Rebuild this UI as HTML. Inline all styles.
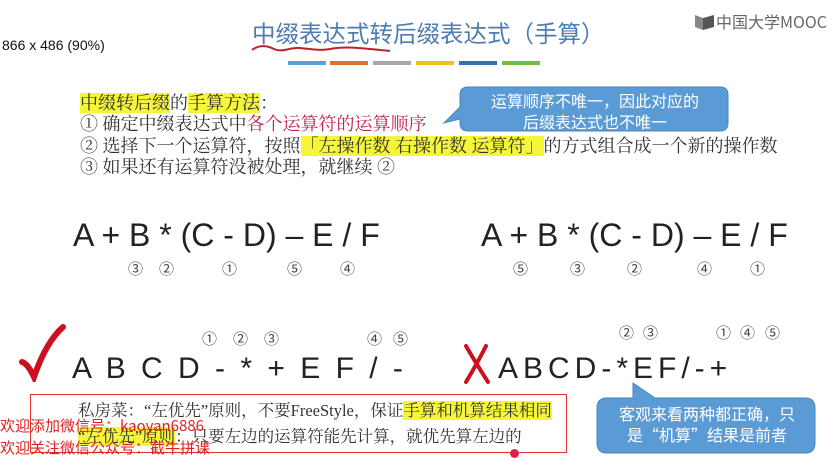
<!DOCTYPE html>
<html><head><meta charset="utf-8"><style>
body{margin:0;width:837px;height:461px;overflow:hidden;background:#fff;position:relative;font-family:"Liberation Sans","Noto Sans CJK SC",sans-serif;}
.a{position:absolute;white-space:nowrap;line-height:1;}
.hl{background:#f5f53a;}
.cn{font-family:"Liberation Serif","Noto Serif CJK SC",serif;color:#333;font-size:18px;}
.n{position:absolute;font-size:15px;color:#444;line-height:1;font-family:"Noto Sans CJK SC",sans-serif;}
.ex{font-size:32px;color:#222;}
</style></head><body>
<div class="a" style="left:2px;top:38px;font-size:14px;color:#111;">866 x 486 (90%)</div>
<div class="a" style="left:252px;top:21px;font-size:23.5px;color:#4f7db0;font-family:'Noto Sans CJK SC',sans-serif;">中缀表达式转后缀表达式（手算）</div>
<svg class="a" style="left:250px;top:44px" width="150" height="12"><path d="M2 6 C10 0,18 2,24 5 C32 9,40 3,50 4 C60 5,70 7,80 5 C95 2,110 4,140 7" stroke="#c0202a" stroke-width="2" fill="none"/></svg>
<div class="a" style="left:288px;top:61px;width:38px;height:4px;background:#5aa0d5"></div>
<div class="a" style="left:330px;top:61px;width:38px;height:4px;background:#e07030"></div>
<div class="a" style="left:373px;top:61px;width:38px;height:4px;background:#a8a8a8"></div>
<div class="a" style="left:416px;top:61px;width:38px;height:4px;background:#f0c020"></div>
<div class="a" style="left:459px;top:61px;width:38px;height:4px;background:#3a6cb8"></div>
<div class="a" style="left:502px;top:61px;width:38px;height:4px;background:#70c040"></div>
<svg class="a" style="left:694px;top:13px" width="22" height="18"><path d="M1 2 L9 5 L9 17 L1 14Z" fill="#888"/><path d="M9 5 L20 2 L20 14 L9 17Z" fill="#555"/></svg>
<div class="a" style="left:716px;top:13px;font-size:16px;color:#666;font-family:'Noto Sans CJK SC',sans-serif;">中国大学MOOC</div>

<div class="a cn" style="left:80px;top:94px;"><span class="hl">中缀转后缀</span>的<span class="hl">手算方法</span>：</div>
<div class="a cn" style="left:80px;top:115px;">① 确定中缀表达式中<span style="color:#c0204a">各个运算符的运算顺序</span></div>
<div class="a cn" style="left:80px;top:137px;">② 选择下一个运算符，按照<span class="hl">「左操作数 右操作数 运算符」</span>的方式组合成一个新的操作数</div>
<div class="a cn" style="left:80px;top:158px;">③ 如果还有运算符没被处理，就继续 ②</div>

<svg class="a" style="left:440px;top:85px" width="292" height="50"><path d="M28 2 H280 Q288 2 288 10 V38 Q288 46 280 46 H28 Q20 46 20 38 V34 L4 38 L20 22 V10 Q20 2 28 2Z" fill="#5b9bd5" stroke="#4a86bf"/></svg>
<div class="a" style="left:470px;top:90px;width:250px;text-align:center;font-size:16px;color:#fff;line-height:21px;font-family:'Noto Sans CJK SC',sans-serif;">运算顺序不唯一，因此对应的<br>后缀表达式也不唯一</div>

<div class="a ex" style="left:73px;top:219px;">A + B * (C - D) – E / F</div>
<div class="a ex" style="left:481px;top:219px;">A + B * (C - D) – E / F</div>
<div class="n" style="left:128px;top:261px">③</div><div class="n" style="left:159px;top:261px">②</div><div class="n" style="left:222px;top:261px">①</div><div class="n" style="left:287px;top:261px">⑤</div><div class="n" style="left:340px;top:261px">④</div>
<div class="n" style="left:513px;top:261px">⑤</div><div class="n" style="left:570px;top:261px">③</div><div class="n" style="left:627px;top:261px">②</div><div class="n" style="left:697px;top:261px">④</div><div class="n" style="left:750px;top:261px">①</div>

<div class="n" style="left:202px;top:331px">①</div><div class="n" style="left:233px;top:331px">②</div><div class="n" style="left:264px;top:331px">③</div><div class="n" style="left:367px;top:331px">④</div><div class="n" style="left:393px;top:331px">⑤</div>
<div class="n" style="left:619px;top:325px">②</div><div class="n" style="left:643px;top:325px">③</div><div class="n" style="left:716px;top:325px">①</div><div class="n" style="left:740px;top:325px">④</div><div class="n" style="left:765px;top:325px">⑤</div>

<svg class="a" style="left:18px;top:322px" width="50" height="60"><path d="M4 40 Q10 42 16 55 Q28 20 45 5" stroke="#cc1020" stroke-width="6" fill="none" stroke-linecap="round"/></svg>
<div class="a ex" style="left:72px;top:354px;font-size:30px;word-spacing:7px;">A B C D - * + E F / -</div>
<svg class="a" style="left:460px;top:340px" width="34" height="46"><path d="M6 6 Q14 20 28 42 M26 6 Q18 22 6 42" stroke="#cc1020" stroke-width="4" fill="none" stroke-linecap="round"/></svg>
<div class="a ex" style="left:498px;top:354px;font-size:30px;letter-spacing:5px;">ABCD-*EF/-+</div>

<div class="a" style="left:30px;top:394px;width:535px;height:57px;border:1px solid #e03030;"></div>
<div class="a cn" style="left:78px;top:403px;font-size:16.5px;">私房菜：“左优先”原则，不要FreeStyle，保证<span class="hl">手算和机算结果相同</span></div>
<div class="a cn" style="left:78px;top:429px;font-size:16.5px;"><span class="hl">“左优先”原则</span>：只要左边的运算符能先计算，就优先算左边的</div>
<div class="a" style="left:0px;top:418px;font-size:15px;color:#e02020;font-family:'Noto Sans CJK SC',sans-serif;">欢迎添加微信号：kaoyan6886</div>
<div class="a" style="left:0px;top:440px;font-size:15px;color:#e02020;font-family:'Noto Sans CJK SC',sans-serif;">欢迎关注微信公众号：截牛拼课</div>
<div class="a" style="left:510px;top:449px;width:9px;height:9px;border-radius:50%;background:#e0204a"></div>

<svg class="a" style="left:595px;top:381px" width="224" height="75"><path d="M38 2 L60 17 H210 Q220 17 220 27 V62 Q220 72 210 72 H12 Q2 72 2 62 V27 Q2 17 12 17 H38Z" fill="#5b9bd5" stroke="#4a86bf"/></svg>
<div class="a" style="left:598px;top:403px;width:218px;text-align:center;font-size:16px;color:#fff;line-height:21px;font-family:'Noto Sans CJK SC',sans-serif;">客观来看两种都正确，只<br>是“机算”结果是前者</div>
</body></html>
